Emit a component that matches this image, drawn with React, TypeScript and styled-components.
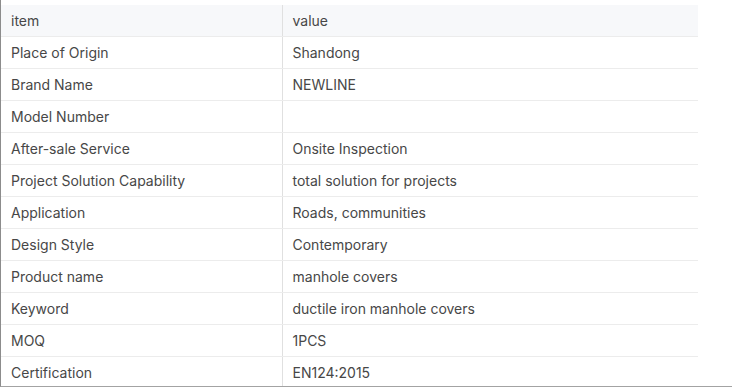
import styled, { createGlobalStyle } from "styled-components";

const GlobalStyle = createGlobalStyle`
  html, body {
    margin: 0;
    padding: 0;
    background: #ffffff;
  }
  body {
    font-family: Inter, "Noto Sans", sans-serif;
  }
`;

const Frame = styled.div`
  box-sizing: border-box;
  height: 387px;
  padding-top: 5px;
  border-left: 1px solid #8c8c8c;
  border-bottom: 1px solid #a3a3a3;
  overflow: hidden;
`;

const Table = styled.table`
  width: 697px;
  border-collapse: collapse;
  table-layout: fixed;
  font-size: 14px;
  color: #474747;
`;

const Cell = styled.td<{ $head?: boolean }>`
  height: 31px;
  padding: 0 10px;
  border-bottom: 1px solid #ececec;
  background: ${(p) => (p.$head ? "#f7f8fa" : "#fff")};
  white-space: nowrap;
  vertical-align: middle;

  & + & {
    border-left: 1px solid #e0e0e0;
  }
`;

const rows: [string, string][] = [
  ["Place of Origin", "Shandong"],
  ["Brand Name", "NEWLINE"],
  ["Model Number", ""],
  ["After-sale Service", "Onsite Inspection"],
  ["Project Solution Capability", "total solution for projects"],
  ["Application", "Roads, communities"],
  ["Design Style", "Contemporary"],
  ["Product name", "manhole covers"],
  ["Keyword", "ductile iron manhole covers"],
  ["MOQ", "1PCS"],
  ["Certification", "EN124:2015"],
];

export default function App() {
  return (
    <>
      <GlobalStyle />
      <Frame>
        <Table>
          <colgroup>
            <col style={{ width: 281 }} />
            <col />
          </colgroup>
          <tbody>
            <tr>
              <Cell $head>item</Cell>
              <Cell $head>value</Cell>
            </tr>
            {rows.map(([item, value]) => (
              <tr key={item}>
                <Cell>{item}</Cell>
                <Cell>{value}</Cell>
              </tr>
            ))}
          </tbody>
        </Table>
      </Frame>
    </>
  );
}
